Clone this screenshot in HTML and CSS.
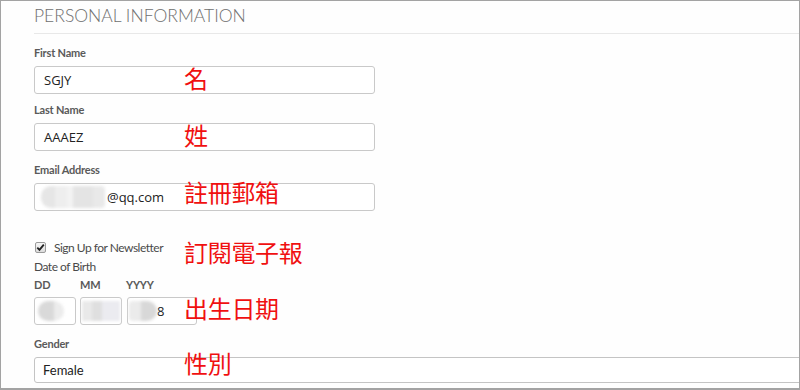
FILE: index.html
```html
<!DOCTYPE html>
<html>
<head>
    <title>Personal Information</title>
    <link rel="stylesheet" href="styles.css">
</head>
<body>
    <div class="frame">
        <div class="section">
            <h2 class="section-title">Personal Information</h2>

            <div class="field field-first">
                <label class="label">First Name</label>
                <div class="text-box">SGJY</div>
                <span class="note note-input">名</span>
            </div>

            <div class="field">
                <label class="label">Last Name</label>
                <div class="text-box">AAAEZ</div>
                <span class="note note-input">姓</span>
            </div>

            <div class="field field-email">
                <label class="label">Email Address</label>
                <div class="text-box"><span class="blur blur-email"></span>@qq.com</div>
                <span class="note note-email">註冊郵箱</span>
            </div>

            <div class="field check-row">
                <span class="checkbox">
                    <svg width="9" height="9" viewBox="0 0 9 9"><path d="M1.3 4.6 L3.5 6.9 L7.8 1.6" fill="none" stroke="#222" stroke-width="1.8"/></svg>
                </span>
                <span class="check-text">Sign Up for Newsletter</span>
                <span class="note note-check">訂閱電子報</span>
            </div>

            <div class="field dob">
                <div class="dob-title">Date of Birth</div>
                <div class="dob-parts">
                    <div class="dob-part">
                        <label class="label">DD</label>
                        <div class="text-box box-dd"><span class="blur blur-dd"></span></div>
                    </div>
                    <div class="dob-part">
                        <label class="label">MM</label>
                        <div class="text-box box-mm"><span class="blur blur-mm"></span></div>
                    </div>
                    <div class="dob-part">
                        <label class="label">YYYY</label>
                        <div class="text-box box-yyyy"><span class="blur blur-yyyy"></span>8</div>
                    </div>
                </div>
                <span class="note note-dob">出生日期</span>
            </div>

            <div class="field field-gender">
                <label class="label">Gender</label>
                <div class="select-box">Female</div>
                <span class="note note-gender">性別</span>
            </div>
        </div>
    </div>
</body>
</html>
```

FILE: styles.css
```css
body {
    margin: 0;
    background: #fff;
    font-family: Lato, "Open Sans", sans-serif;
}

.frame {
    width: 800px;
    height: 390px;
    box-sizing: border-box;
    border: 1px solid #a3a3a3;
    border-bottom-width: 2px;
    overflow: hidden;
    background: #fefefe;
}

.section {
    padding-left: 33px;
}

.section-title {
    margin: 0;
    height: 32px;
    border-bottom: 1px solid #e8e8e8;
    font-size: 17.5px;
    font-weight: 300;
    line-height: 30px;
    letter-spacing: 0;
    color: #6f6f6f;
    text-transform: uppercase;
}

.field {
    position: relative;
    margin-top: 9px;
}

.field-first {
    margin-top: 12px;
}

.field-email {
    margin-top: 12px;
}

.label {
    display: block;
    font-size: 11px;
    font-weight: 700;
    line-height: 14px;
    color: #5a5a5a;
    margin-bottom: 6px;
    letter-spacing: -0.2px;
}

.text-box {
    width: 341px;
    height: 28px;
    box-sizing: border-box;
    border: 1px solid #c9c9c9;
    border-radius: 3px;
    padding-left: 9px;
    display: flex;
    align-items: center;
    font-family: "Open Sans", sans-serif;
    font-size: 13px;
    color: #222;
    background: #fff;
}

.note {
    position: absolute;
    left: 150px;
    font-family: "Noto Sans CJK TC", sans-serif;
    font-size: 24px;
    line-height: 28px;
    color: #f01010;
    letter-spacing: -0.3px;
}

.note-input { top: 18px; }
.note-email { top: 15px; }
.note-check { top: -2px; }
.note-dob { top: 35px; }
.note-gender { top: 12px; }

.blur {
    display: inline-block;
    filter: blur(1.5px);
}

.blur-email {
    width: 64px;
    height: 22px;
    margin-left: -3px;
    margin-right: 2px;
    background: linear-gradient(90deg, #e6e6e6 0 14px, #eeeeee 14px 26px, #f3f3f3 26px 32px, #e4e4e4 32px 52px, #e9e9e9 52px);
    border-radius: 10px 4px 4px 10px;
}

/* newsletter checkbox row */
.check-row {
    margin-top: 29px;
    display: flex;
    align-items: center;
    height: 15px;
}

.checkbox {
    width: 9px;
    height: 9px;
    border: 1px solid #9a9a9a;
    border-radius: 2px;
    background: linear-gradient(#f6f6f6, #dcdcdc);
    display: flex;
    align-items: center;
    justify-content: center;
    margin-left: 1px;
    margin-right: 8px;
}

.check-text {
    font-size: 12px;
    font-weight: 400;
    color: #4a4a4a;
    letter-spacing: -0.5px;
}

/* date of birth */
.dob {
    margin-top: 4px;
}

.dob-title {
    font-size: 12px;
    font-weight: 400;
    line-height: 15px;
    color: #4a4a4a;
    margin-bottom: 4px;
    letter-spacing: -0.5px;
}

.dob-parts {
    display: flex;
    gap: 4px;
}

.dob-part .label {
    margin-bottom: 5px;
}

.dob-part .text-box {
    padding-left: 3px;
}

.box-dd, .box-mm {
    width: 42px;
}

.box-yyyy {
    width: 70px;
    margin-left: 1px;
}

.blur-dd {
    width: 26px;
    height: 20px;
    border-radius: 10px;
    background: linear-gradient(90deg, #d9d9d9 0 16px, #ececec 16px);
}

.blur-mm {
    width: 38px;
    height: 20px;
    margin-left: -2px;
    background: linear-gradient(90deg, #e9e9e9 0 10px, #dfdfdf 10px 20px, #ebebf0 20px);
}

.blur-yyyy {
    width: 28px;
    height: 20px;
    margin-left: -2px;
    margin-right: 0;
    border-radius: 4px 10px 10px 4px;
    background: linear-gradient(90deg, #ebebeb 0 12px, #d8d8d8 12px);
}

/* gender */
.field-gender {
    margin-top: 12px;
}

.select-box {
    width: 780px;
    height: 26px;
    box-sizing: border-box;
    border: 1px solid #c4c4c4;
    border-radius: 3px;
    padding-left: 8px;
    display: flex;
    align-items: center;
    font-size: 13px;
    color: #222;
    background: #fff;
}
```
